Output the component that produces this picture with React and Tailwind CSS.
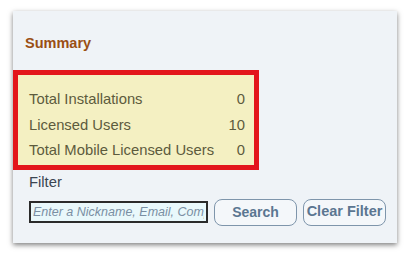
import React from 'react';

const rows = [
  { label: 'Total Installations', value: 0 },
  { label: 'Licensed Users', value: 10 },
  { label: 'Total Mobile Licensed Users', value: 0 },
];

const App = () => {
  return (
    <div className="w-[412px] h-[255px] bg-white pt-[11px] pl-[13px] font-['Liberation_Sans',Arial,sans-serif]">
      <div className="w-[384px] h-[232px] bg-[#eff3f7] shadow-[0px_2px_5px_rgba(0,0,0,0.5)]">
        {/* Summary header */}
        <div className="pt-[24px] pl-[12px] text-[14.5px] leading-[16px] font-bold text-[#9a4f14]">
          Summary
        </div>

        {/* Totals box */}
        <div className="mt-[19px] w-[246px] border-[5px] border-[#e3161b] bg-[#f4f0c2] pt-[12px] pb-[1px] pl-[11px] pr-[9px] text-[14.8px] text-[#5d5b3d]">
          {rows.map((r) => (
            <div key={r.label} className="flex justify-between leading-[25.5px]">
              <span>{r.label}</span>
              <span>{r.value}</span>
            </div>
          ))}
        </div>

        {/* Filter */}
        <div className="mt-[4px] pl-[16px] text-[14.8px] leading-[16px] text-[#3b4552]">Filter</div>
        <div className="mt-[9px] pl-[16px] flex items-center">
          <input
            className="w-[179px] h-[22px] border-2 border-[#2b2b2b] bg-[#e9f8fb] px-[2px] text-[12.5px] italic text-[#333] placeholder:text-[#7a8fa3] outline-none"
            placeholder="Enter a Nickname, Email, Company"
          />
          <button className="ml-[6px] w-[83px] h-[27px] rounded-[8px] border border-[#7e95ab] bg-[#f4f7fa] text-[14px] font-bold text-[#5b7691]">
            Search
          </button>
          <button className="ml-[6px] w-[83px] h-[27px] rounded-[8px] border border-[#7e95ab] bg-[#f4f7fa] text-[14.5px] font-bold text-[#5b7691]">
            Clear Filter
          </button>
        </div>
      </div>
    </div>
  );
};

export default App;
